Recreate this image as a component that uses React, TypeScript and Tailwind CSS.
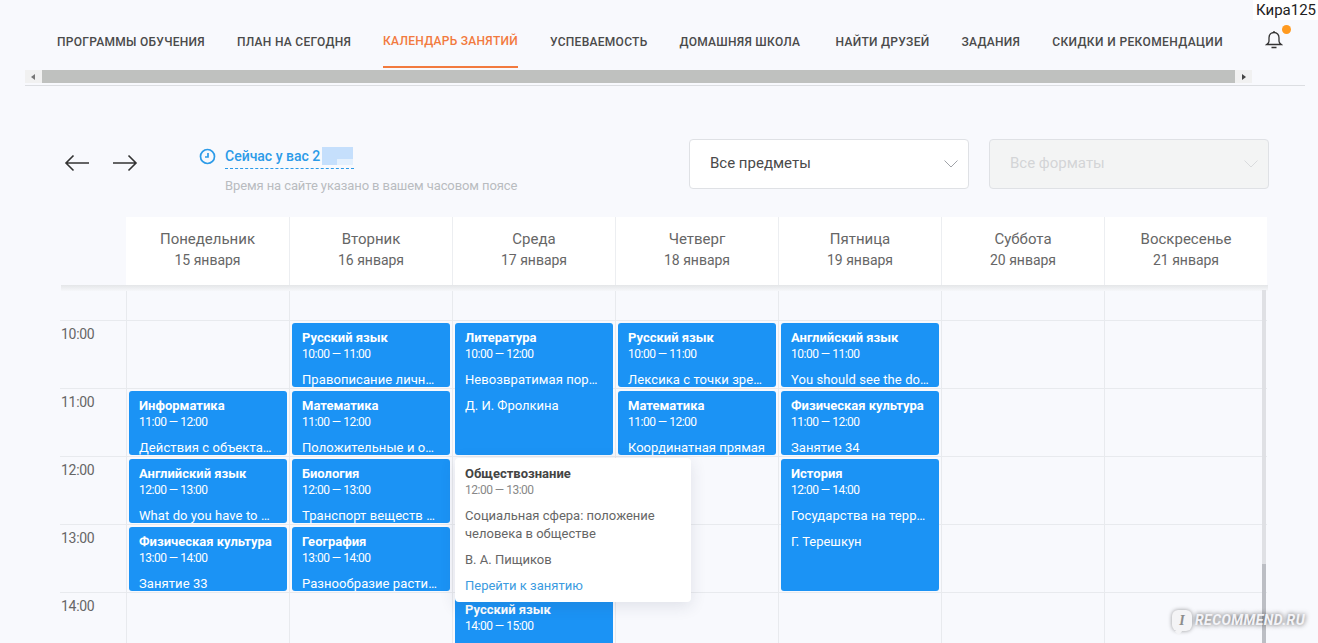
import React from 'react';

const tabs = [
    { label: 'Программы обучения', cls: '' },
    { label: 'План на сегодня', cls: '' },
    { label: 'Календарь занятий', cls: '' },
    { label: 'Успеваемость', cls: '' },
    { label: 'Домашняя школа', cls: 'w-[124px]' },
    { label: 'Найти друзей', cls: '' },
    { label: 'Задания', cls: '' },
    { label: 'Скидки и рекомендации', cls: 'tracking-[0.38px]' },
];

const days = [
    ['Понедельник', '15 января'],
    ['Вторник', '16 января'],
    ['Среда', '17 января'],
    ['Четверг', '18 января'],
    ['Пятница', '19 января'],
    ['Суббота', '20 января'],
    ['Воскресенье', '21 января'],
];

const hours = [
    { time: '', cls: 'row-start-1' },
    { time: '10:00', cls: 'row-start-2' },
    { time: '11:00', cls: 'row-start-3' },
    { time: '12:00', cls: 'row-start-4' },
    { time: '13:00', cls: 'row-start-5' },
    { time: '14:00', cls: 'row-start-6' },
];

const colClasses = ['col-start-2', 'col-start-3', 'col-start-4', 'col-start-5', 'col-start-6', 'col-start-7', 'col-start-8'];

const lessons = [
    { pos: 'col-start-2 row-start-3', title: 'Информатика', time: '11:00 — 12:00', text: 'Действия с объектами и файлами' },
    { pos: 'col-start-2 row-start-4', title: 'Английский язык', time: '12:00 — 13:00', text: 'What do you have to do at home' },
    { pos: 'col-start-2 row-start-5', title: 'Физическая культура', time: '13:00 — 14:00', text: 'Занятие 33' },
    { pos: 'col-start-3 row-start-2', title: 'Русский язык', time: '10:00 — 11:00', text: 'Правописание личных окончаний' },
    { pos: 'col-start-3 row-start-3', title: 'Математика', time: '11:00 — 12:00', text: 'Положительные и отрицательные' },
    { pos: 'col-start-3 row-start-4', title: 'Биология', time: '12:00 — 13:00', text: 'Транспорт веществ у растений' },
    { pos: 'col-start-3 row-start-5', title: 'География', time: '13:00 — 14:00', text: 'Разнообразие растительного мира' },
    { pos: 'col-start-4 row-start-2 row-span-2', title: 'Литература', time: '10:00 — 12:00', text: 'Невозвратимая пора детства', teacher: 'Д. И. Фролкина' },
    { pos: 'col-start-4 row-start-6', title: 'Русский язык', time: '14:00 — 15:00', text: '' },
    { pos: 'col-start-5 row-start-2', title: 'Русский язык', time: '10:00 — 11:00', text: 'Лексика с точки зрения' },
    { pos: 'col-start-5 row-start-3', title: 'Математика', time: '11:00 — 12:00', text: 'Координатная прямая', fits: true },
    { pos: 'col-start-6 row-start-2', title: 'Английский язык', time: '10:00 — 11:00', text: 'You should see the doctor' },
    { pos: 'col-start-6 row-start-3', title: 'Физическая культура', time: '11:00 — 12:00', text: 'Занятие 34' },
    { pos: 'col-start-6 row-start-4 row-span-2', title: 'История', time: '12:00 — 14:00', text: 'Государства на территории', teacher: 'Г. Терешкун' },
];

const Chevron = ({ color }: { color: string }) => (
    <svg width="14" height="8" viewBox="0 0 14 8" fill="none" stroke={color} strokeWidth="1">
        <path d="M0.500 0.500L7 7l6.500-6.500" />
    </svg>
);

const App = () => {
    return (
        <div className="relative h-[643px] w-[1318px] overflow-hidden bg-[#f8f9fd] font-['Roboto',sans-serif] text-[#3c3c3c]">
            {/* user name pasted over the screenshot */}
            <div className="absolute right-0 top-0 bg-white pl-[3px] pr-[2px] text-[15px] leading-[20px] text-[#222]">Кира125</div>

            <div className="ml-[25px] w-[1280px] border-b border-[#dcdee2]">
                <div className="flex h-[70px] items-start">
                    <nav className="flex w-[1227px] gap-[32px] pl-[32px]">
                        {tabs.map((tab, i) => (
                            <div
                                key={tab.label}
                                className={
                                    i === 2
                                        ? 'flex h-[68px] items-center whitespace-nowrap border-b-2 border-[#f27a3e] pt-[15px] text-[12px] font-medium uppercase tracking-[0.28px] text-[#f27a3e]'
                                        : `flex h-[68px] items-center whitespace-nowrap pt-[15px] text-[12px] font-medium uppercase tracking-[0.28px] text-[#4a4a4a] ${tab.cls}`
                                }
                            >
                                {tab.label}
                            </div>
                        ))}
                    </nav>
                    <div className="relative ml-[2px] flex h-[70px] w-[40px] items-center justify-center pt-[10px]">
                        <svg width="18" height="20" viewBox="0 0 18 20" fill="none" stroke="#333" strokeWidth="1.300">
                            <path d="M9 2.500c-3 0-5 2.300-5 5.200v3.500c0 1.300-1 2.300-2.300 3.300h14.600c-1.300-1-2.300-2-2.300-3.300V7.700c0-2.900-2-5.200-5-5.200z" />
                            <path d="M9 1v1.500M6.500 17.500h5" />
                        </svg>
                        <span className="absolute left-[28px] top-[25px] h-[9px] w-[9px] rounded-full bg-[#ff9a1f]" />
                    </div>
                </div>
                <div className="flex h-[13px] w-[1227px] items-center gap-px bg-[#f1f1f1]">
                    <div className="flex w-[16px] justify-center">
                        <span className="h-0 w-0 border-y-[3px] border-r-[4px] border-y-transparent border-r-[#777]" />
                    </div>
                    <div className="h-[13px] flex-1 bg-[#bfc1bf]" />
                    <div className="flex w-[16px] justify-center">
                        <span className="h-0 w-0 border-y-[3px] border-l-[4px] border-y-transparent border-l-[#444]" />
                    </div>
                </div>
                <div className="h-[2px]" />
            </div>

            <div className="mt-[53px] flex h-[78px] pl-[64px]">
                <div className="flex h-[48px] items-center gap-[22px]">
                    <svg width="26" height="18" viewBox="0 0 26 18" fill="none" stroke="#333" strokeWidth="1.6">
                        <path d="M25 9H2M9.500 1.500L2 9l7.500 7.500" />
                    </svg>
                    <svg width="26" height="18" viewBox="0 0 26 18" fill="none" stroke="#333" strokeWidth="1.6">
                        <path d="M1 9h23M16.500 1.500L24 9l-7.500 7.500" />
                    </svg>
                </div>
                <div className="ml-[61px] w-[318px] pt-[7px]">
                    <div className="flex items-center gap-[9px]">
                        <svg width="17" height="17" viewBox="0 0 17 17" fill="none" stroke="#2c9be8" strokeWidth="1.700" className="-mt-[3px]">
                            <circle cx="8.500" cy="8.500" r="7" />
                            <path d="M9 5v4H6" />
                        </svg>
                        <div className="relative border-b border-dashed border-[#2c9be8] pb-[1px] text-[14px] font-medium leading-[21px] text-[#2c9be8]">
                            <span className="inline-block w-[129px] whitespace-nowrap">Сейчас у вас 2</span>
                            <span className="absolute right-[1px] top-[1px] h-[18px] w-[31px] bg-[#c5dffc]">
                                <span className="absolute bottom-0 right-0 h-[6px] w-[16px] bg-[#e4f0fd]" />
                            </span>
                        </div>
                    </div>
                    <div className="ml-[26px] mt-[9px] whitespace-nowrap text-[13px] leading-[16px] tracking-[-0.1px] text-[#b9bcc0]">
                        Время на сайте указано в вашем часовом поясе
                    </div>
                </div>
                <div className="ml-[172px] flex h-[50px] w-[280px] items-center justify-between rounded-[4px] border border-[#dfe1e5] bg-white pb-[1px] pl-[20px] pr-[10px] text-[15px] text-[#4a4a4a]">
                    Все предметы
                    <Chevron color="#a0a3a8" />
                </div>
                <div className="ml-[20px] flex h-[50px] w-[280px] items-center justify-between rounded-[4px] border border-[#dfe1e5] bg-[#f3f4f4] pb-[1px] pl-[20px] pr-[10px] text-[15px] text-[#d3d5d7]">
                    Все форматы
                    <Chevron color="#d9dbdd" />
                </div>
            </div>

            <div className="ml-[60px] flex h-[68px] w-[1208px]">
                <div className="w-[66px]" />
                {days.map(([name, date], i) => (
                    <div
                        key={name}
                        className={
                            i === 0
                                ? 'flex w-[163px] flex-col items-center justify-center bg-white pb-[2px] text-[#666]'
                                : 'flex w-[163px] flex-col items-center justify-center border-l border-[#eceef1] bg-white pb-[2px] text-[#666]'
                        }
                    >
                        <div className="text-[15px] leading-[21px]">{name}</div>
                        <div className="text-[14px] leading-[21px]">{date}</div>
                    </div>
                ))}
            </div>
            <div className="ml-[61px] h-[6px] w-[1207px] bg-gradient-to-b from-[#e4e6e8] to-[#f6f7fa]" />

            <div className="ml-[60px] grid w-[1208px] grid-cols-[66px_repeat(7,163px)] grid-rows-[30px_repeat(5,68px)]">
                {hours.map((h) => (
                    <React.Fragment key={h.cls}>
                        <div className={`col-start-1 ${h.cls} border-b border-[#e8eaee] pl-px pt-[4px] text-[14px] leading-[18px] tracking-[-0.3px] text-[#666]`}>
                            {h.time}
                        </div>
                        {colClasses.map((c) => (
                            <div key={c} className={`${c} ${h.cls} border-b border-l border-[#e8eaee]`} />
                        ))}
                    </React.Fragment>
                ))}
                {lessons.map((l) => (
                    <div
                        key={l.pos}
                        className={`${l.pos} z-10 mb-[2px] ml-[3px] mr-[2px] mt-[2px] overflow-hidden rounded-[3px] bg-[#1b93f5] pl-[10px] pr-[10px] pt-[6px] text-white`}
                    >
                        <div className="truncate text-[13px] font-bold leading-[18px]">{l.title}</div>
                        <div className="text-[12px] leading-[15px] tracking-[-0.5px]">{l.time}</div>
                        <div className={l.fits ? 'mt-[9px] truncate text-[13px] leading-[18px]' : 'mt-[9px] truncate text-[13px] leading-[18px] tracking-[0.08px]'}>{l.text}</div>
                        {l.teacher && <div className="mt-[8px] truncate text-[13px] leading-[18px]">{l.teacher}</div>}
                    </div>
                ))}
            </div>

            {/* popup opened over the Wednesday column */}
            <div className="absolute left-[455px] top-[458px] z-20 h-[144px] w-[236px] rounded-[4px] bg-white pl-[10px] pr-[11px] pt-[7px] text-[#666] shadow-[0_4px_16px_rgba(40,50,80,0.12)]">
                <div className="text-[13px] font-bold leading-[18px] text-[#444]">Обществознание</div>
                <div className="text-[12px] leading-[15px] tracking-[-0.5px] text-[#888]">12:00 — 13:00</div>
                <div className="mt-[9px] text-[13px] leading-[18px]">Социальная сфера: положение человека в обществе</div>
                <div className="mt-[8px] text-[13px] leading-[18px]">В. А. Пищиков</div>
                <div className="mt-[8px] text-[13px] leading-[18px] text-[#3b9be0]">Перейти к занятию</div>
            </div>

            {/* schedule scrollbar */}
            <div className="absolute left-[1262px] top-[290px] z-10 h-[353px] w-[4px] bg-[#dfe0e4]">
                <div className="mt-[274px] h-[79px] bg-[#bcbec4]" />
            </div>

            {/* watermark */}
            <div className="absolute left-[1172px] top-[610px] z-30 flex items-center gap-[3px]">
                <div className="relative flex h-[21px] w-[20px] items-center justify-center rounded-[6px] bg-[#f4f4f6] font-['Liberation_Serif',serif] text-[14px] font-bold italic text-[#8c8c8c] shadow-[0_0_4px_rgba(0,0,0,0.4)]">
                    I
                    <span className="absolute -bottom-[3px] left-[4px] h-[5px] w-[5px] rotate-45 bg-[#f4f4f6]" />
                </div>
                <div className="text-[14px] font-bold italic tracking-[0.4px] text-[#f4f4f8] [text-shadow:0_0_5px_rgba(0,0,0,0.7)]">RECOMMEND.RU</div>
            </div>
        </div>
    );
};

export default App;
